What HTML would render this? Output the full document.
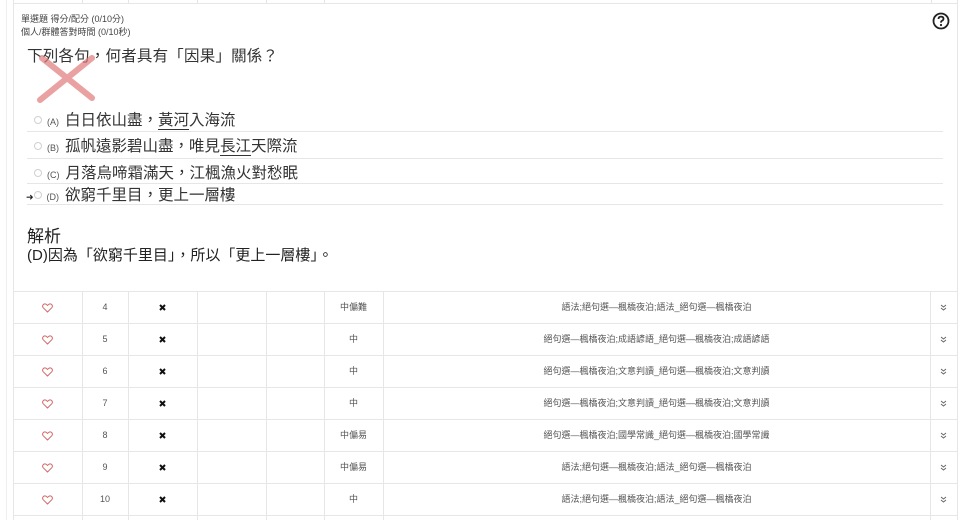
<!DOCTYPE html>
<html><head><meta charset="utf-8"><style>
*{margin:0;padding:0;box-sizing:border-box}
body{width:960px;height:520px;background:#fff;font-family:"Liberation Sans","Noto Sans CJK TC",sans-serif;color:#333;position:relative;overflow:hidden}
.a{position:absolute;white-space:nowrap}
.vl{position:absolute;width:1px;background:#e6e6e6}
.hl{position:absolute;height:1px;background:#e6e6e6}
.opt{position:absolute;left:34px;font-size:15.5px;color:#333;line-height:18px}
.opt .r{display:inline-block;width:8px;height:8px;border:1px solid #d0d0d0;border-radius:50%;margin-right:5px;vertical-align:1px}
.opt .l{font-size:9px;color:#555;margin-right:6px}
.u{border-bottom:1.5px solid #333}
.cell{position:absolute;font-size:9px;color:#555;text-align:center;height:32px;line-height:32px}
</style></head><body>
<div class="vl" style="left:6px;top:0;height:520px;background:#eee"></div>
<div class="vl" style="left:13px;top:0;height:520px"></div>
<div class="vl" style="left:957px;top:0;height:520px"></div>
<div class="hl" style="left:13px;top:3px;width:945px"></div>
<div class="vl" style="left:82px;top:0;height:3px"></div>
<div class="vl" style="left:128px;top:0;height:3px"></div>
<div class="vl" style="left:197px;top:0;height:3px"></div>
<div class="vl" style="left:266px;top:0;height:3px"></div>
<div class="vl" style="left:324px;top:0;height:3px"></div>
<div class="vl" style="left:931px;top:0;height:3px"></div>

<div class="a" style="left:21px;top:13px;font-size:9px;color:#444;line-height:13px">單選題 得分/配分 (0/10分)<br>個人/群體答對時間 (0/10秒)</div>
<svg class="a" style="left:932px;top:12px" width="18" height="18" viewBox="0 0 18 18"><circle cx="9" cy="9" r="7.5" fill="none" stroke="#222" stroke-width="1.8"/><path d="M6.5 7 Q6.5 4.6 9 4.6 Q11.5 4.6 11.5 6.8 Q11.5 8.2 9.8 8.9 Q9 9.3 9 10.6" fill="none" stroke="#222" stroke-width="1.8"/><circle cx="9" cy="13" r="1.1" fill="#222"/></svg>
<div class="a" style="left:27px;top:44px;font-size:15.5px;color:#333;letter-spacing:0.2px">下列各句，何者具有「因果」關係？</div>
<svg class="a" style="left:36px;top:54px" width="62" height="50"><path d="M6 4 L56 44 M56 4 L4 46" stroke="#e07a7a" stroke-width="6" opacity=".7" stroke-linecap="round"/></svg>

<div class="opt" style="top:112px"><span class="r"></span><span class="l">(A)</span>白日依山盡，<span class="u">黃河</span>入海流</div>
<div class="hl" style="left:27px;top:131px;width:916px"></div>
<div class="opt" style="top:138px"><span class="r"></span><span class="l">(B)</span>孤帆遠影碧山盡，唯見<span class="u">長江</span>天際流</div>
<div class="hl" style="left:27px;top:158px;width:916px"></div>
<div class="opt" style="top:165px"><span class="r"></span><span class="l">(C)</span>月落烏啼霜滿天，江楓漁火對愁眠</div>
<div class="hl" style="left:27px;top:183px;width:916px"></div>
<div class="opt" style="top:187px;left:26px"><span style="font-size:9px;color:#222">➜</span><span class="r"></span><span class="l">(D)</span>欲窮千里目，更上一層樓</div>
<div class="hl" style="left:27px;top:204px;width:916px"></div>

<div class="a" style="left:27px;top:222px;font-size:17px;color:#222">解析</div>
<div class="a" style="left:27px;top:244px;font-size:15px;color:#222">(D)因為「欲窮千里目」，所以「更上一層樓」。</div>

<div id="t"></div>
<script>
var rows=[["4","中偏難","語法;絕句選—楓橋夜泊;語法_絕句選—楓橋夜泊"],["5","中","絕句選—楓橋夜泊;成語諺語_絕句選—楓橋夜泊;成語諺語"],["6","中","絕句選—楓橋夜泊;文意判讀_絕句選—楓橋夜泊;文意判讀"],["7","中","絕句選—楓橋夜泊;文意判讀_絕句選—楓橋夜泊;文意判讀"],["8","中偏易","絕句選—楓橋夜泊;國學常識_絕句選—楓橋夜泊;國學常識"],["9","中偏易","語法;絕句選—楓橋夜泊;語法_絕句選—楓橋夜泊"],["10","中","語法;絕句選—楓橋夜泊;語法_絕句選—楓橋夜泊"]];
var h='',cols=[82,128,197,266,324,383,930];
h+='<div class="hl" style="left:13px;top:291px;width:945px"></div>';
cols.forEach(function(c){h+='<div class="vl" style="left:'+c+'px;top:291px;height:229px"></div>'});
rows.forEach(function(r,i){var y=291+i*32;
h+='<div class="hl" style="left:13px;top:'+(y+32)+'px;width:945px"></div>';
h+='<div class="cell" style="left:13px;width:69px;top:'+y+'px"><svg width="11" height="10" viewBox="0 0 11 10" style="vertical-align:middle"><path d="M5.5 9 L1.3 4.8 Q0 3.3 1 1.9 Q2.4 0.3 4.2 1.3 L5.5 2.5 L6.8 1.3 Q8.6 0.3 10 1.9 Q11 3.3 9.7 4.8 Z" fill="none" stroke="#d46a6a" stroke-width="1"/></svg></div>';
h+='<div class="cell" style="left:82px;width:46px;top:'+y+'px">'+r[0]+'</div>';
h+='<div class="cell" style="left:128px;width:69px;top:'+y+'px"><svg width="7" height="7" viewBox="0 0 7 7" style="vertical-align:middle"><path d="M1 1 L6 6 M6 1 L1 6" stroke="#111" stroke-width="2"/></svg></div>';
h+='<div class="cell" style="left:324px;width:59px;top:'+y+'px">'+r[1]+'</div>';
h+='<div class="cell" style="left:383px;width:547px;top:'+y+'px">'+r[2]+'</div>';
h+='<div class="cell" style="left:930px;width:27px;top:'+y+'px"><svg width="7" height="7" viewBox="0 0 7 7" style="vertical-align:middle"><path d="M1 1 L3.5 3 L6 1 M1 4 L3.5 6 L6 4" fill="none" stroke="#666" stroke-width="1"/></svg></div>';
});
document.getElementById('t').innerHTML=h;
</script>
</body></html>
